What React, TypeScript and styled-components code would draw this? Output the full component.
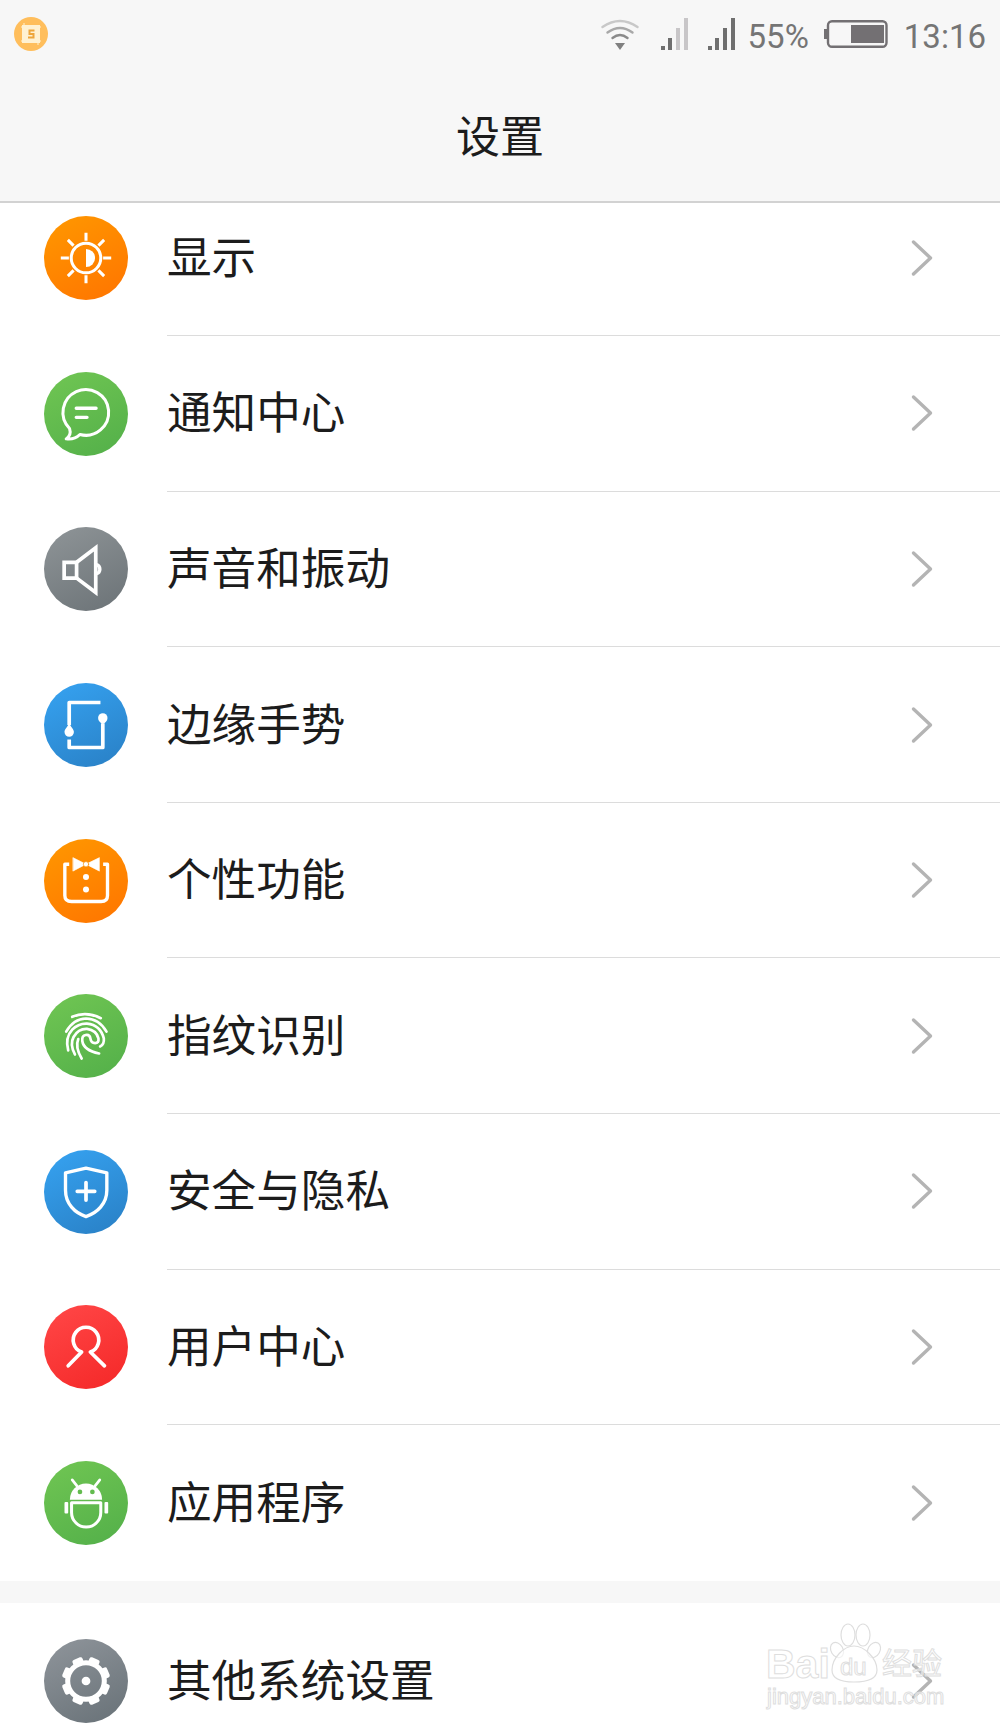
import React from 'react'
import styled, { createGlobalStyle } from 'styled-components'

const GlobalStyle = createGlobalStyle`
  html, body {
    margin: 0;
    padding: 0;
    background: #ffffff;
  }
`

const cjk = `"Noto Sans CJK SC", "Noto Sans", sans-serif`

const Screen = styled.div`
  position: relative;
  width: 1000px;
  height: 1730px;
  overflow: hidden;
  display: flex;
  flex-direction: column;
  background: #ffffff;
  font-family: ${cjk};
`

const Top = styled.header`
  flex: none;
  height: 201px;
  background: #f7f7f7;
  border-bottom: 2px solid #d2d2d2;
  display: flex;
  flex-direction: column;
`

const StatusBar = styled.div`
  height: 68px;
  display: flex;
  align-items: center;
  justify-content: space-between;
  padding: 0 14px 0 14px;
`

const StatusGroup = styled.div`
  display: flex;
  align-items: center;
`

const StatusSlot = styled.div<{ $ml: number }>`
  margin-left: ${(p) => p.$ml}px;
  display: flex;
  align-items: center;
`

const StatusText = styled.span`
  font-family: Roboto, "Liberation Sans", sans-serif;
  font-size: 33px;
  line-height: 36px;
  padding-top: 6px;
  color: #757575;
`

const Title = styled.h1`
  margin: 0;
  flex: 1;
  display: flex;
  align-items: center;
  justify-content: center;
  padding-bottom: 2px;
  font-size: 44px;
  font-weight: 400;
  color: #1c1c1c;
`

const ListClip = styled.div`
  flex: 1;
  overflow: hidden;
`

const List = styled.div`
  margin-top: -22.5px;
`

const Group = styled.section`
  background: #ffffff;
  & + & {
    margin-top: 22px;
  }
`

const Band = styled.div`
  background: #f7f7f7;
`

const Row = styled.div`
  height: 155.6px;
  display: flex;
  align-items: stretch;
  padding-left: 44px;
  &:last-child > div:last-child {
    border-bottom: none;
  }
`

const IconWrap = styled.div`
  flex: none;
  align-self: center;
  width: 84px;
  height: 84px;
`

const Body = styled.div`
  flex: 1;
  margin-left: 39px;
  padding-right: 67px;
  display: flex;
  align-items: center;
  justify-content: space-between;
  border-bottom: 1px solid #dcdcdc;
`

const Label = styled.span`
  font-size: 44.6px;
  padding-bottom: 7px;
  color: #1c1c1c;
`

const Watermark = styled.div`
  position: absolute;
  left: 764px;
  top: 1620px;
  width: 186px;
  height: 100px;
`

const WmWord = styled.span<{ $x: number; $y: number; $size: number; $bold?: boolean }>`
  position: absolute;
  left: ${(p) => p.$x}px;
  top: ${(p) => p.$y}px;
  font-family: "Liberation Sans", ${cjk};
  font-size: ${(p) => p.$size}px;
  font-weight: ${(p) => (p.$bold ? 700 : 400)};
  line-height: 1;
  white-space: nowrap;
  color: rgba(255, 255, 255, 0.55);
  -webkit-text-stroke: 1px #dedede;
`

const WmPaw = styled.svg`
  position: absolute;
  left: 0;
  top: 0;
`

type GradName = 'orange' | 'green' | 'grey' | 'blue' | 'red' | 'slate'

const grads: Record<GradName, [string, string]> = {
  orange: ['#ff9500', '#ff7700'],
  green: ['#6ec452', '#55b14a'],
  grey: ['#8c9295', '#6e7579'],
  blue: ['#35a0ee', '#2a82c8'],
  red: ['#ff4545', '#f52a2a'],
  slate: ['#8c9298', '#6b747a'],
}

const Disc: React.FC<{ name: GradName; children: React.ReactNode }> = ({ name, children }) => (
  <IconWrap>
    <svg width="84" height="84" viewBox="0 0 250 250" fill="none" stroke="#fff" strokeWidth="9" strokeLinecap="round" strokeLinejoin="round">
      <defs>
        <linearGradient id={`g-${name}`} x1="0.25" y1="0" x2="0.75" y2="1">
          <stop offset="0" stopColor={grads[name][0]} />
          <stop offset="1" stopColor={grads[name][1]} />
        </linearGradient>
      </defs>
      <circle cx="125" cy="125" r="125" fill={`url(#g-${name})`} stroke="none" />
      {children}
    </svg>
  </IconWrap>
)

const SunIcon = () => (
  <Disc name="orange">
    <g strokeLinecap="butt">
      <circle cx="125" cy="125" r="44" />
      <path d="M125 50V74M125 176V200M50 125H74M176 125H200M71 71L88 88M179 71L162 88M71 179L88 162M179 179L162 162" />
    </g>
    <path d="M125 98A27 27 0 0 1 125 152Z" fill="#fff" stroke="none" />
  </Disc>
)

const ChatIcon = () => (
  <Disc name="green">
    <path d="M107 186A68 68 0 1 0 76 168C80 180 76 192 66 199C82 201 96 197 107 186Z" />
    <path d="M96 108H155M96 135H128" strokeWidth="10" />
  </Disc>
)

const SpeakerIcon = () => (
  <Disc name="grey">
    <path d="M60 105H97L154 62V195L97 152H60Z" strokeLinejoin="miter" strokeWidth="11" />
    <path d="M97 105V152" strokeWidth="11" />
    <path d="M156 112A14 14 0 0 1 156 139" strokeWidth="10" />
  </Disc>
)

const EdgeIcon = () => (
  <Disc name="blue">
    <path d="M168 58H75V125M75 168V192H175V120" strokeLinecap="butt" strokeWidth="11" />
    <path d="M75 118C80 132 89 136 89 146A14 14 0 0 1 61 146C61 136 70 132 75 118Z" fill="#fff" stroke="none" />
    <path d="M175 122C167 118 161 112 161 104A14 14 0 0 1 189 104C189 112 183 118 175 122Z" fill="#fff" stroke="none" />
  </Disc>
)

const TuxIcon = () => (
  <Disc name="orange">
    <path d="M75 75H62V168Q62 186 82 186H170Q189 186 189 168V75H176" strokeWidth="10" strokeLinecap="butt" />
    <path d="M87 56L125 75L87 95ZM164 56L125 75L164 95Z" fill="#fff" stroke="#fff" strokeWidth="2" />
    <circle cx="125" cy="75" r="8" fill="#fff" stroke="#f58a00" strokeWidth="2" />
    <circle cx="125" cy="113" r="9" fill="#fff" stroke="none" />
    <circle cx="125" cy="150" r="9" fill="#fff" stroke="none" />
  </Disc>
)

const FingerIcon = () => (
  <Disc name="green">
    <g strokeWidth="8">
      <path d="M84 68Q125 50 169 72" />
      <path d="M66 112Q88 74 125 73Q164 74 186 112" />
      <path d="M72 168Q62 130 84 106Q102 87 128 88Q168 92 178 132Q180 150 167 156" />
      <path d="M92 180Q76 150 88 128Q102 103 128 104Q156 108 162 132Q164 146 152 146Q140 146 138 132Q136 120 124 122Q112 124 114 140Q118 168 164 177" />
      <path d="M112 192Q92 158 102 134" />
    </g>
  </Disc>
)

const ShieldIcon = () => (
  <Disc name="blue">
    <path d="M64 68L125 54L187 68V120C187 160 158 188 125 198C92 188 64 160 64 120Z" strokeWidth="10" />
    <path d="M99 123H151M125 97V149" strokeWidth="11" />
  </Disc>
)

const UserIcon = () => (
  <Disc name="red">
    <path d="M72 181L112 140A38 38 0 1 1 138 140L180 181" strokeWidth="11" />
  </Disc>
)

const AndroidIcon = () => (
  <Disc name="green">
    <path d="M77 115A48 48 0 0 1 173 115Z" fill="#fff" stroke="none" />
    <circle cx="107" cy="92" r="7" fill="#62bb4e" stroke="none" />
    <circle cx="144" cy="92" r="7" fill="#62bb4e" stroke="none" />
    <path d="M84 56L98 74M166 56L152 74" strokeWidth="8" />
    <rect x="61" y="122" width="11" height="34" rx="3" fill="#fff" stroke="none" />
    <rect x="180" y="122" width="11" height="34" rx="3" fill="#fff" stroke="none" />
    <path d="M82 124H169V153A43 43 0 0 1 82 153Z" strokeWidth="9" />
  </Disc>
)

const GearIcon = () => (
  <Disc name="slate">
    <circle cx="125" cy="125" r="54.5" strokeWidth="15" />
    {[0, 1, 2, 3, 4, 5, 6, 7].map((i) => (
      <rect
        key={i}
        x="109"
        y="53"
        width="32"
        height="18"
        rx="6"
        fill="#fff"
        stroke="none"
        transform={`rotate(${22.5 + i * 45} 125 125)`}
      />
    ))}
    <circle cx="125" cy="125" r="13" fill="#fff" stroke="none" />
  </Disc>
)

const Chevron = () => (
  <svg width="22" height="38" viewBox="0 0 22 38" fill="none" stroke="#b4b4b4" strokeWidth="3.4" strokeLinecap="round" strokeLinejoin="round">
    <path d="M2.5 3L19.5 19L2.5 35" />
  </svg>
)

const AppBadge = () => (
  <svg width="34" height="34" viewBox="0 0 34 34">
    <circle cx="17" cy="17" r="17" fill="#ffbe5c" />
    <rect x="8" y="8" width="18" height="18" fill="#fff1d2" />
    <path d="M7 10H27M10 6V26M24 8V28M7 24H27" stroke="#fff1d2" strokeWidth="1" />
    <path d="M20.5 13.5H15.5V17H19.5V20.5H14" fill="none" stroke="#eea63c" strokeWidth="2" />
  </svg>
)

const WifiIcon = () => (
  <svg width="38" height="32" viewBox="0 0 38 32" fill="none" strokeLinecap="round">
    <path d="M1.5 9Q19 -3 36.5 9" stroke="#c8c8c8" strokeWidth="2.4" />
    <path d="M6.5 14.5Q19 5.5 31.5 14.5" stroke="#a8a8a8" strokeWidth="2.4" />
    <path d="M11.5 20Q19 14 26.5 20" stroke="#8a8a8a" strokeWidth="2.4" />
    <path d="M14 25H24L19 32Z" fill="#808080" />
  </svg>
)

const SignalIcon: React.FC<{ faded?: boolean }> = ({ faded }) => (
  <svg width="27" height="32" viewBox="0 0 27 32">
    <rect x="0" y="28" width="4" height="4" fill="#6f6f6f" />
    <rect x="7" y="20" width="4" height="12" fill="#6f6f6f" />
    <rect x="15" y="10" width="4" height="22" fill={faded ? '#c8c6c8' : '#6f6f6f'} />
    <rect x="23" y="0" width="4" height="32" fill={faded ? '#c8c6c8' : '#6f6f6f'} />
  </svg>
)

const BatteryIcon = () => (
  <svg width="64" height="28" viewBox="0 0 64 28">
    <rect x="0" y="9" width="4" height="10" fill="#737073" />
    <rect x="4" y="1.2" width="58.5" height="25.6" rx="4" fill="none" stroke="#737073" strokeWidth="2.4" />
    <rect x="27" y="5" width="33" height="18" fill="#737073" />
  </svg>
)

const mainRows: { label: string; icon: React.ReactNode }[] = [
  { label: '显示', icon: <SunIcon /> },
  { label: '通知中心', icon: <ChatIcon /> },
  { label: '声音和振动', icon: <SpeakerIcon /> },
  { label: '边缘手势', icon: <EdgeIcon /> },
  { label: '个性功能', icon: <TuxIcon /> },
  { label: '指纹识别', icon: <FingerIcon /> },
  { label: '安全与隐私', icon: <ShieldIcon /> },
  { label: '用户中心', icon: <UserIcon /> },
  { label: '应用程序', icon: <AndroidIcon /> },
]

const SettingRow: React.FC<{ label: string; icon: React.ReactNode }> = ({ label, icon }) => (
  <Row>
    {icon}
    <Body>
      <Label>{label}</Label>
      <Chevron />
    </Body>
  </Row>
)

const App: React.FC = () => {
  return (
    <Screen>
      <GlobalStyle />
      <Top>
        <StatusBar>
          <AppBadge />
          <StatusGroup>
            <WifiIcon />
            <StatusSlot $ml={22}><SignalIcon faded /></StatusSlot>
            <StatusSlot $ml={20}><SignalIcon /></StatusSlot>
            <StatusSlot $ml={13}><StatusText>55%</StatusText></StatusSlot>
            <StatusSlot $ml={15}><BatteryIcon /></StatusSlot>
            <StatusSlot $ml={16}><StatusText>13:16</StatusText></StatusSlot>
          </StatusGroup>
        </StatusBar>
        <Title>设置</Title>
      </Top>
      <ListClip>
        <Band>
          <List>
            <Group>
              {mainRows.map((r) => (
                <SettingRow key={r.label} label={r.label} icon={r.icon} />
              ))}
            </Group>
            <Group>
              <SettingRow label="其他系统设置" icon={<GearIcon />} />
            </Group>
          </List>
        </Band>
      </ListClip>
      <Watermark>
        <WmPaw width="120" height="66" viewBox="0 0 120 66" fill="rgba(255,255,255,0.6)" stroke="#dedede" strokeWidth="1.2">
          <ellipse cx="73" cy="30" rx="6" ry="8" transform="rotate(-30 73 30)" />
          <ellipse cx="84" cy="15" rx="7" ry="11" />
          <ellipse cx="99" cy="15" rx="7" ry="11" />
          <ellipse cx="110" cy="30" rx="6" ry="8" transform="rotate(30 110 30)" />
          <path d="M68 50C68 38 80 26 90 26C100 26 113 38 113 50C113 58 105 62 90 62C75 62 68 58 68 50Z" />
        </WmPaw>
        <WmWord $x={2} $y={24} $size={41} $bold>Bai</WmWord>
        <WmWord $x={76} $y={35} $size={24}>du</WmWord>
        <WmWord $x={118} $y={29} $size={30}>经验</WmWord>
        <WmWord $x={3} $y={66} $size={22}>jingyan.baidu.com</WmWord>
      </Watermark>
    </Screen>
  )
}

export default App
